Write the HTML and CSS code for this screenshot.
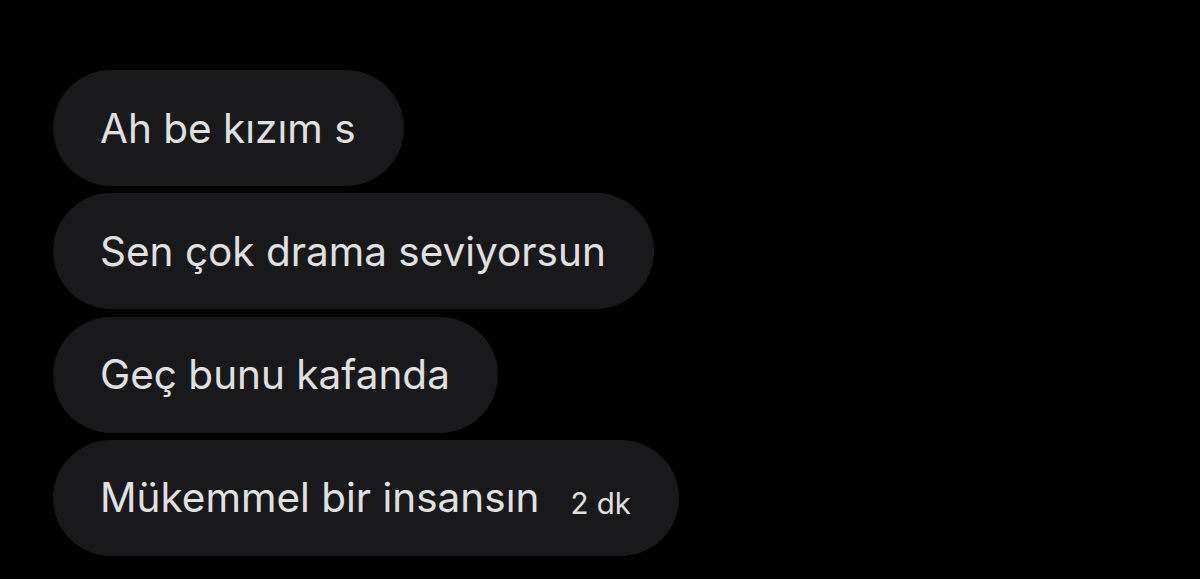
FILE: index.html
```html
<!DOCTYPE html>
<html lang="tr">
<head>
<meta charset="utf-8">
<link rel="stylesheet" href="styles.css">
</head>
<body>
<div class="thread">
  <div class="bubble"><span class="text">Ah be kızım s</span></div>
  <div class="bubble"><span class="text">Sen çok drama seviyorsun</span></div>
  <div class="bubble"><span class="text">Geç bunu kafanda</span></div>
  <div class="bubble"><span class="text">Mükemmel bir insansın</span><span class="time">2 dk</span></div>
</div>
</body>
</html>
```
FILE: styles.css
```css
html, body {
  margin: 0;
  background: #000;
  height: 100%;
  overflow: hidden;
}
.thread {
  display: flex;
  flex-direction: column;
  align-items: flex-start;
  gap: 7.3px;
  padding: 70px 0 0 53px;
  font-family: Inter, Roboto, "Noto Sans", sans-serif;
}
.bubble {
  height: 116px;
  box-sizing: border-box;
  display: flex;
  align-items: center;
  padding: 0 48px 0 47px;
  border-radius: 58px;
  background: #19191b;
  color: #e0e0e0;
}
.text {
  font-size: 40.5px;
}
.time {
  font-size: 29.5px;
  margin-left: 31px;
  margin-top: 10px;
}
```
